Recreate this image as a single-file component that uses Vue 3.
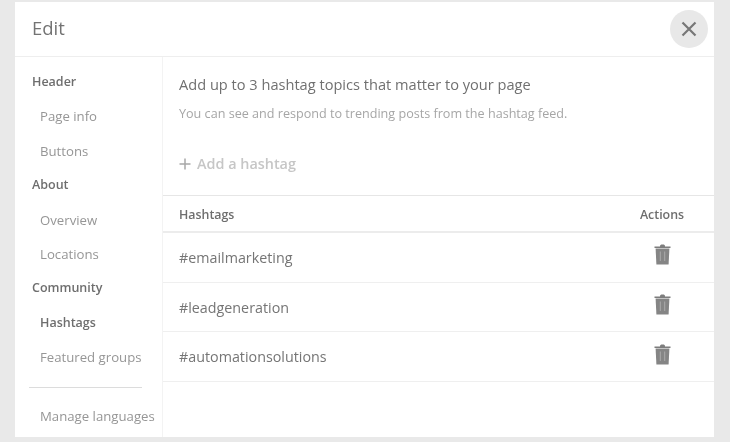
<template>
  <div class="page">
    <div class="modal">
      <header class="modal-head">
        <h2>Edit</h2>
        <button class="close" aria-label="Close">
          <svg width="16" height="16" viewBox="0 0 16 16">
            <path d="M1.5 1.5 L14.5 14.5 M14.5 1.5 L1.5 14.5" stroke="#777" stroke-width="2.2" fill="none" />
          </svg>
        </button>
      </header>

      <div class="modal-body">
        <nav class="side">
          <div
            v-for="item in navItems"
            :key="item.label"
            class="nav-item"
            :class="{ group: item.group, active: item.active }"
          >
            {{ item.label }}
          </div>
          <div class="side-rule"></div>
          <div class="nav-item manage">Manage languages</div>
        </nav>

        <main class="content">
          <section class="intro">
            <h3>Add up to 3 hashtag topics that matter to your page</h3>
            <p>You can see and respond to trending posts from the hashtag feed.</p>
            <div class="add">
              <svg width="12" height="12" viewBox="0 0 12 12">
                <path d="M6 0.5 V11.5 M0.5 6 H11.5" stroke="#a8a8a8" stroke-width="1.5" fill="none" />
              </svg>
              <span>Add a hashtag</span>
            </div>
          </section>

          <div class="table-head">
            <span>Hashtags</span>
            <span class="actions">Actions</span>
          </div>

          <div v-for="tag in hashtags" :key="tag" class="row">
            <span>{{ tag }}</span>
            <span class="actions">
              <svg class="trash" width="17" height="21" viewBox="0 0 17 21">
                <path d="M0.5 2.6 H16.5 V4 H0.5 Z M6 2.6 C6 1 6.5 0.6 8.5 0.6 C10.5 0.6 11 1 11 2.6 Z" fill="#7d7d7d" />
                <path d="M1.6 4.4 H15.4 L14.6 20.4 H2.4 Z" fill="#858585" />
                <path d="M6.3 7.5 V17 M10.7 7.5 V17" stroke="#aaa" stroke-width="1" fill="none" />
              </svg>
            </span>
          </div>
        </main>
      </div>
    </div>
  </div>
</template>

<script setup>
const navItems = [
  { label: 'Header', group: true },
  { label: 'Page info' },
  { label: 'Buttons' },
  { label: 'About', group: true },
  { label: 'Overview' },
  { label: 'Locations' },
  { label: 'Community', group: true },
  { label: 'Hashtags', active: true },
  { label: 'Featured groups' }
]

const hashtags = ['#emailmarketing', '#leadgeneration', '#automationsolutions']
</script>

<style>
html,
body {
  margin: 0;
  background: #e9e9e9;
}
</style>

<style scoped>
.page {
  width: 730px;
  height: 442px;
  padding: 2px 16px 5px 15px;
  box-sizing: border-box;
  font-family: "Open Sans", "Liberation Sans", sans-serif;
  overflow: hidden;
}
.modal {
  height: 100%;
  background: #fff;
  display: flex;
  flex-direction: column;
  filter: blur(0.45px);
}
.modal-head {
  height: 55px;
  flex: none;
  box-sizing: border-box;
  border-bottom: 1px solid #eeeeee;
  display: flex;
  align-items: center;
  justify-content: space-between;
  padding: 0 6px 0 17px;
}
.modal-head h2 {
  margin: -3px 0 0;
  font-size: 18.5px;
  font-weight: 400;
  color: #737373;
}
.close {
  width: 38px;
  height: 38px;
  border: none;
  border-radius: 50%;
  background: #e8e8e8;
  padding: 0;
  display: flex;
  align-items: center;
  justify-content: center;
}
.modal-body {
  flex: 1;
  display: flex;
  min-height: 0;
}
.side {
  width: 148px;
  flex: none;
  box-sizing: border-box;
  border-right: 1px solid #f3f3f3;
  padding-top: 8px;
}
.nav-item {
  height: 34.4px;
  line-height: 34.4px;
  padding-left: 25px;
  font-size: 13.2px;
  color: #969696;
  white-space: nowrap;
}
.nav-item.group {
  padding-left: 17px;
  font-size: 12.5px;
  font-weight: 600;
  color: #6e6e6e;
}
.nav-item.active {
  font-size: 12.5px;
  font-weight: 600;
  color: #6e6e6e;
}
.side-rule {
  height: 1px;
  background: #dcdcdc;
  margin: 12px 20px 11px 14px;
}
.content {
  flex: 1;
  min-width: 0;
}
.intro {
  height: 139px;
  box-sizing: border-box;
  padding: 16px 16px 0;
  border-bottom: 1px solid #e6e6e6;
}
.intro h3 {
  margin: 0;
  font-size: 14.6px;
  line-height: 22px;
  font-weight: 400;
  color: #707070;
}
.intro p {
  margin: 10px 0 0;
  font-size: 12.6px;
  line-height: 17px;
  color: #a6a6a6;
}
.add {
  display: flex;
  align-items: center;
  gap: 6px;
  margin-top: 32px;
  font-size: 14.4px;
  line-height: 20px;
  font-weight: 600;
  color: #c6c6c6;
}
.table-head {
  height: 37px;
  box-sizing: border-box;
  padding: 1px 29px 0 16px;
  border-bottom: 2px solid #ececec;
  display: flex;
  align-items: center;
  justify-content: space-between;
  font-size: 12.4px;
  font-weight: 600;
  color: #6e6e6e;
}
.row {
  height: 49.7px;
  box-sizing: border-box;
  padding: 0 29px 0 16px;
  border-bottom: 1px solid #efefef;
  display: flex;
  align-items: center;
  justify-content: space-between;
  font-size: 14.3px;
  color: #757575;
}
.actions {
  width: 46px;
  display: flex;
  justify-content: center;
}
.trash {
  margin-top: -5px;
}
</style>
